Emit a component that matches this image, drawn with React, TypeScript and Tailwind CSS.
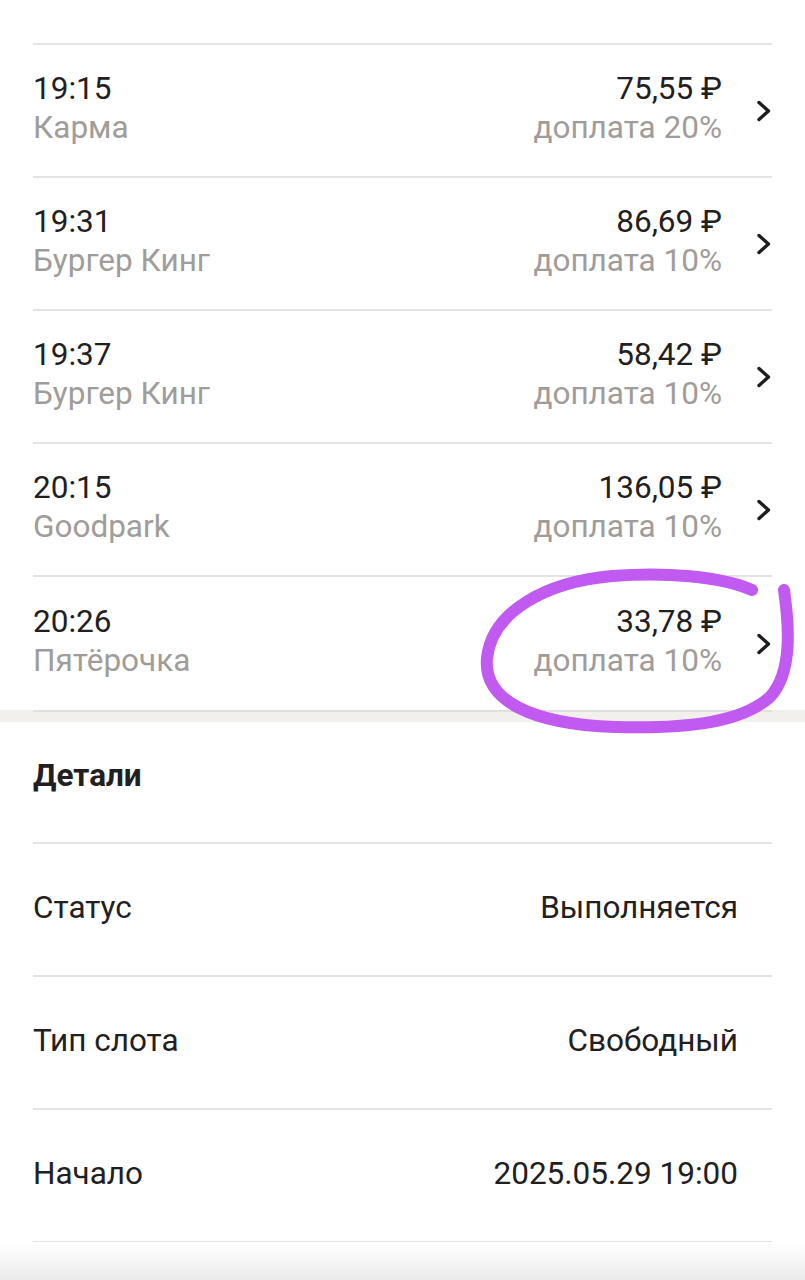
import React from "react";

const rows = [
  { time: "19:15", name: "Карма", amount: "75,55 ₽", extra: "доплата 20%" },
  { time: "19:31", name: "Бургер Кинг", amount: "86,69 ₽", extra: "доплата 10%" },
  { time: "19:37", name: "Бургер Кинг", amount: "58,42 ₽", extra: "доплата 10%" },
  { time: "20:15", name: "Goodpark", amount: "136,05 ₽", extra: "доплата 10%" },
  { time: "20:26", name: "Пятёрочка", amount: "33,78 ₽", extra: "доплата 10%" },
];

const details = [
  { label: "Статус", value: "Выполняется" },
  { label: "Тип слота", value: "Свободный" },
  { label: "Начало", value: "2025.05.29 19:00" },
];

function Chevron() {
  return (
    <svg width="16" height="26" viewBox="0 0 16 26" className="shrink-0">
      <path d="M3 4.5 L12.5 13 L3 21.5" fill="none" stroke="#1f1e1d" strokeWidth="3.4" strokeLinecap="round" strokeLinejoin="round" />
    </svg>
  );
}

export default function App() {
  return (
    <div
      className="relative w-[805px] h-[1280px] overflow-hidden bg-white text-[#21201f]"
      style={{ fontFamily: "Roboto, 'Noto Sans', sans-serif" }}
    >
      <div className="h-[43px]" />
      <div className="mx-[33px] border-t-2 border-[#e4e4e4]">
        {rows.map((r, i) => (
          <div
            key={i}
            className={`flex items-center h-[133px] ${i < rows.length - 1 ? "border-b-2 border-[#e4e4e4]" : ""}`}
          >
            <div className="flex-1 flex flex-col text-[31.5px] leading-[39px] mb-[6px]">
              <span>{r.time}</span>
              <span className="text-[#9f9c99]">{r.name}</span>
            </div>
            <div className="flex flex-col items-end text-[31.5px] leading-[39px] mb-[6px]">
              <span>{r.amount}</span>
              <span className="text-[#9f9c99]">{r.extra}</span>
            </div>
            <div className="ml-[34px] flex items-center">
              <Chevron />
            </div>
          </div>
        ))}
      </div>
      <div className="h-[12px] bg-[#f2f0ed]">
        <div className="mx-[33px] h-[2px] bg-[#e2e0dd]" />
      </div>
      <div className="px-[33px]">
        <div className="h-[122px] pt-[35px] text-[31.5px] leading-[38px] font-bold border-b-2 border-[#e4e4e4]">
          Детали
        </div>
        {details.map((d, i) => (
          <div key={i} className="flex items-center justify-between h-[133px] pr-[34px] pb-[4px] border-b-2 border-[#e4e4e4] text-[31.5px] leading-[38px]">
            <span>{d.label}</span>
            <span>{d.value}</span>
          </div>
        ))}
      </div>
      <div className="absolute left-0 right-0 bottom-0 h-[38px] bg-gradient-to-b from-white to-[#ebebeb]" />
      <svg className="absolute left-0 top-0 pointer-events-none" width="805" height="1280">
        <path
          d="M752 590 C720 576, 665 572, 612 576 C545 582, 492 612, 487 658 C483 700, 530 724, 615 727 C690 729, 742 722, 770 697 C793 672, 789 625, 784 590"
          fill="none"
          stroke="#c05af0"
          strokeWidth="12"
          strokeLinecap="round"
          strokeLinejoin="round"
        />
      </svg>
    </div>
  );
}
